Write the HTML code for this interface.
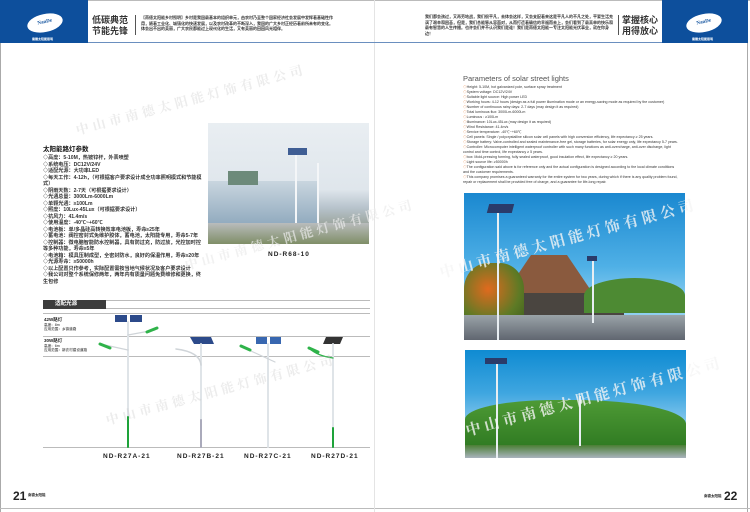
<!DOCTYPE html>
<html><head><meta charset="utf-8"><style>
*{margin:0;padding:0;box-sizing:border-box}
body{width:750px;height:512px;background:#fff;position:relative;overflow:hidden;font-family:"Liberation Sans","Noto Sans CJK SC",sans-serif;color:#222}
.a{position:absolute}
.blue{background:#0d4f9c}
.logo{position:absolute;left:27px;top:14px;width:36px;height:18px;background:#fff;border-radius:50%;transform:rotate(-12deg);font:bold 5px "Liberation Serif",serif;color:#0d4f9c;text-align:center;line-height:18px}
.lt{font:bold 3px sans-serif;color:#fff}
.t7{font-size:5.1px;line-height:6.5px;font-weight:bold;color:#333}
.en{font-size:3.6px;line-height:5px;color:#333;white-space:nowrap}
.en span{color:#e8742a}
.wm{position:absolute;font-family:"Noto Serif CJK SC",serif;font-weight:bold;color:rgba(200,200,200,0.35);font-size:13px;letter-spacing:4px;transform-origin:left center;white-space:nowrap}
.lab{font:bold 6.5px "Liberation Sans",sans-serif;letter-spacing:1px;color:#222}
</style></head><body>
<div class="a" style="left:0;top:0;width:750px;height:1px;background:#bbb"></div>
<div class="a" style="left:0;top:0;width:1px;height:512px;background:#aaa"></div>
<div class="a" style="left:747px;top:0;width:1px;height:512px;background:#aaa"></div>
<div class="a" style="left:0;top:508px;width:750px;height:1px;background:#bbb"></div>
<div class="a" style="left:374px;top:0;width:1px;height:512px;background:#e4e4e4"></div>
<div class="a blue" style="left:0;top:0;width:88px;height:43px"><div class="logo">NanDe</div><div class="a lt" style="left:32px;top:37px">南德太阳能照明</div></div>
<div class="a" style="left:88px;top:42px;width:287px;height:1px;background:#6a8fbf"></div>
<div class="a" style="left:92px;top:15px;font-size:9px;line-height:11px;font-weight:bold;color:#333">低碳典范<br>节能先锋</div>
<div class="a" style="left:135px;top:15px;width:1px;height:20px;background:#555"></div>
<div class="a" style="left:141px;top:15px;width:195px;font-size:4px;line-height:5.5px;font-weight:bold;color:#333">【南德太阳能乡村照明】乡村是我国最基本的组织单元，由农村乃至整个国家经济社会发展中发挥着基础性作用，随着工业化、城镇化的快速发展，以及农村改革的不断深入，我国的广大乡村正经历着前所未有的变化。体会出不出的美丽，广大农民都能过上现代化的生活，又有美丽的田园风光相伴。</div>
<div class="a blue" style="left:662px;top:0;width:86px;height:43px"><div class="logo" style="left:24px">NanDe</div><div class="a lt" style="left:30px;top:37px">南德太阳能照明</div></div>
<div class="a" style="left:375px;top:42px;width:287px;height:1px;background:#6a8fbf"></div>
<div class="a" style="left:425px;top:14px;width:190px;font-size:4px;line-height:5.5px;font-weight:bold;color:#333">我们都会孩过，又再劳地战，我们很平凡，去体会这样，又会支配着来这是平凡人的不凡之处，平要生活充满了艰辛和困苦，但是，我们总能够从容面对，从而打造着确信的幸福而去上，会们看到了最真单的快乐和最有智慧的人生传播。也许会们并不认识我们是谁！我们是南德太阳能一专注太阳能光伏事业，就在你身边！</div>
<div class="a" style="left:618px;top:15px;width:1px;height:20px;background:#555"></div>
<div class="a" style="left:622px;top:15px;font-size:9px;line-height:11px;font-weight:bold;color:#333">掌握核心<br>用得放心</div>

<div class="a" style="left:43px;top:143px;font-size:6.5px;font-weight:bold;color:#111">太阳能路灯参数</div>
<div class="a t7" style="left:43px;top:155px;width:162px">◇高度：5-10M，热镀锌杆，外表喷塑<br>◇系统电压：DC12V/24V<br>◇适配光源：大功率LED<br>◇每天工作：4-12h，（可根据客户要求设计成全功率照明模式和节能模式）<br>◇阴雨天数：2-7天（可根据要求设计）<br>◇光通总量：3000Lm-6000Lm<br>◇单颗光通：≥100Lm<br>◇照度：10Lux-45Lux（可根据要求设计）<br>◇抗风力：41.4m/s<br>◇使用温度：-40℃~+60℃<br>◇电池板：单/多晶硅高转换效率电池板，寿命≥25年<br>◇蓄电池：阀控密封式免维护胶体，蓄电池，太阳能专用，寿命5-7年<br>◇控制器：微电脑智能防水控制器，具有防过充，防过放，光控加时控等多种功能，寿命≥5年<br>◇电池箱：模具压制成型，全密封防水，良好的保温作用，寿命≥20年<br>◇光源寿命：≥50000h<br>◇以上配置只作参考，实际配置需按当地气候状况及客户要求设计<br>◇我公司对整个系统保修两年，两年内有质量问题免费维修和更换，终生包修</div>
<div class="a" style="left:208px;top:123px;width:161px;height:121px;background:linear-gradient(#e9eef2,#dfe6ec 55%,#b7c3cc 70%,#9aa39a 85%,#7c8c6a);overflow:hidden">
<div class="a" style="left:0;top:58px;width:110px;height:45px;background:linear-gradient(#c9d6df,#8fa9bd)"></div>
<div class="a" style="left:20px;top:48px;width:30px;height:14px;background:#6d8a7a"></div>
<div class="a" style="left:87px;top:25px;width:2px;height:96px;background:#f4f6f8"></div>
<div class="a" style="left:80px;top:25px;width:19px;height:7px;background:#3f5e94"></div>
<div class="a" style="left:109px;top:40px;width:2px;height:75px;background:#f4f6f8"></div>
<div class="a" style="left:0;top:100px;width:161px;height:21px;background:linear-gradient(#b9bcbd,#7f8e67)"></div>
</div>
<div class="a lab" style="left:268px;top:251px">ND-R68-10</div>

<div class="a" style="left:43px;top:300px;width:63px;height:9px;background:#3c3c3c;color:#fff;font-size:5.5px;font-weight:bold;padding-left:12px;line-height:9px">适配光源</div>
<div class="a" style="left:106px;top:300px;width:264px;height:1px;background:#bbb"></div>
<div class="a" style="left:106px;top:308px;width:264px;height:1px;background:#bbb"></div>
<div class="a" style="left:43px;top:313px;width:327px;height:1px;background:#bbb"></div>
<div class="a" style="left:43px;top:336px;width:327px;height:1px;background:#bbb"></div>
<div class="a" style="left:43px;top:356px;width:327px;height:1px;background:#bbb"></div>
<div class="a" style="left:43px;top:447px;width:327px;height:1px;background:#bbb"></div>
<div class="a" style="left:44px;top:318px;font-size:3.6px;line-height:4.5px;color:#222"><b style="font-size:4.5px">42W路灯</b><br>高度：8m<br>应用范围：乡镇道路</div>
<div class="a" style="left:44px;top:339px;font-size:3.6px;line-height:4.5px;color:#222"><b style="font-size:4.5px">30W路灯</b><br>高度：6m<br>应用范围：新农村建设道路</div>
<svg class="a" style="left:0;top:0" width="375" height="512">
<g stroke-linecap="round">
<rect x="115" y="315" width="12" height="7" fill="#2c4a8a"/><rect x="130" y="315" width="12" height="7" fill="#2c4a8a"/>
<line x1="128" y1="322" x2="128" y2="417" stroke="#dfe4e8" stroke-width="2"/><line x1="128" y1="417" x2="128" y2="447" stroke="#1ea33a" stroke-width="2"/>
<path d="M128 335 L155 330 M128 350 L105 345" stroke="#cfd4d8" stroke-width="1.2" fill="none"/>
<path d="M147 332 L157 328 M100 344 L110 348" stroke="#2fb34a" stroke-width="3"/>
<polygon points="190,337 211,337 214,344 194,344" fill="#2c4a8a"/>
<line x1="201" y1="344" x2="201" y2="420" stroke="#dfe4e8" stroke-width="2"/><line x1="201" y1="420" x2="201" y2="447" stroke="#aab" stroke-width="2"/>
<path d="M201 365 Q200 352 176 349" stroke="#cfd4d8" stroke-width="1.5" fill="none"/>
<rect x="256" y="337" width="11" height="7" fill="#3867b0"/><rect x="270" y="337" width="11" height="7" fill="#3867b0"/>
<line x1="268" y1="344" x2="268" y2="447" stroke="#dfe4e8" stroke-width="2"/>
<path d="M240 346 L275 362" stroke="#cfd4d8" stroke-width="1.2"/><path d="M241 346 L250 350" stroke="#2fb34a" stroke-width="3"/>
<polygon points="326,337 343,337 340,344 323,344" fill="#333"/>
<line x1="333" y1="344" x2="333" y2="428" stroke="#dfe4e8" stroke-width="2"/><line x1="333" y1="428" x2="333" y2="447" stroke="#1ea33a" stroke-width="2"/>
<path d="M333 358 Q318 356 310 349" stroke="#2fb34a" stroke-width="1.2" fill="none"/><path d="M309 348 L318 352" stroke="#2fb34a" stroke-width="3"/>
</g></svg>
<div class="a lab" style="left:103px;top:453px">ND-R27A-21</div>
<div class="a lab" style="left:177px;top:453px">ND-R27B-21</div>
<div class="a lab" style="left:244px;top:453px">ND-R27C-21</div>
<div class="a lab" style="left:311px;top:453px">ND-R27D-21</div>
<div class="a" style="left:13px;top:489px;font-size:12px;font-weight:bold">21</div>
<div class="a" style="left:28px;top:493px;font-size:3.5px;font-weight:bold">南德太阳能</div>

<div class="a" style="left:463px;top:74px;font-size:7.5px;color:#555">Parameters of solar street lights</div>
<div class="a en" style="left:463px;top:85px"><span>◇</span>Height: 5-10M, hot galvanized  pole, surface spray treatment<br><span>◇</span>System voltage: DC12V/24V<br><span>◇</span>Suitable light source: High power LED<br><span>◇</span>Working hours: 4-12 hours (design as a full power illumination mode or an energy-saving mode as required by the customer)<br><span>◇</span>Number of continuous rainy days: 2-7 days (may design it as required)<br><span>◇</span>Total luminous flux: 3000Lm-6000Lm<br><span>◇</span>Luminous : ≥100Lm<br><span>◇</span>Illuminance: 10Lux-45Lux (may design it as required)<br><span>◇</span>Wind Resistance: 41.4m/s<br><span>◇</span>Service temperature: -40℃~+60℃<br><span>◇</span>Cell panels: Single / polycrystalline silicon solar cell panels with high conversion efficiency, life expectancy ≥ 25 years.<br><span>◇</span>Storage battery: Valve-controlled and sealed maintenance-free gel, storage batteries, for solar energy only, life expectancy 5-7 years.<br><span>◇</span>Controller: Microcomputer intelligent waterproof controller with such many functions as anti-overcharge, anti-over discharge, light<br>control and time control, life expectancy ≥ 5 years.<br><span>◇</span>box: Mold-pressing forming, fully sealed waterproof, good insulation effect, life expectancy ≥ 20 years.<br><span>◇</span>Light source life: ≥50000h<br><span>◇</span>The configuration said above is for reference only and the actual configuration is designed according to the local climate conditions<br>and the customer requirements.<br><span>◇</span>This company promises a guaranteed warranty for the entire system for two years, during which if there is any quality problem found,<br>repair or replacement shall be provided free of charge, and a guarantee for life-long repair.</div>
<div class="a" style="left:464px;top:193px;width:221px;height:147px;background:linear-gradient(#1a88d0,#4fb0e6 50%,#8fcff0 75%);overflow:hidden">
<div class="a" style="left:40px;top:62px;width:90px;height:40px;background:#8a5a3e;clip-path:polygon(30% 0,70% 0,100% 100%,0 100%)"></div>
<div class="a" style="left:40px;top:100px;width:120px;height:22px;background:#4a4540"></div>
<div class="a" style="left:0;top:70px;width:60px;height:65px;background:radial-gradient(circle at 40% 40%,#e06a1e,#5d7a25 60%,#3a5a1c);border-radius:40% 40% 0 0"></div>
<div class="a" style="left:120px;top:85px;width:101px;height:35px;background:#4d8a33;border-radius:50% 50% 0 0"></div>
<div class="a" style="left:0;top:122px;width:221px;height:25px;background:linear-gradient(#9aa3a8,#606670)"></div>
<div class="a" style="left:33px;top:15px;width:2px;height:132px;background:#e8eef2"></div>
<div class="a" style="left:24px;top:11px;width:25px;height:9px;background:#2a3b6a;transform:skewX(-15deg)"></div>
<div class="a" style="left:128px;top:65px;width:2px;height:65px;background:#e8eef2"></div>
<div class="a" style="left:123px;top:63px;width:10px;height:5px;background:#2a3b6a"></div>
</div>
<div class="a" style="left:465px;top:350px;width:221px;height:108px;background:linear-gradient(#0f8bd2,#3fa6e0 40%,#8ccbee 70%);overflow:hidden">
<div class="a" style="left:0;top:50px;width:221px;height:48px;background:linear-gradient(#4e9a35,#2f7a22);border-radius:40% 50% 0 0"></div>
<div class="a" style="left:0;top:95px;width:221px;height:13px;background:linear-gradient(#4b7f35,#a9b3bd)"></div>
<div class="a" style="left:31px;top:10px;width:2px;height:98px;background:#e8eef2"></div>
<div class="a" style="left:20px;top:8px;width:22px;height:6px;background:#2a3b6a"></div>
<div class="a" style="left:114px;top:46px;width:2px;height:50px;background:#e8eef2"></div>
</div>
<div class="a" style="left:704px;top:494px;font-size:3.5px;font-weight:bold">南德太阳能</div>
<div class="a" style="left:724px;top:489px;font-size:12px;font-weight:bold">22</div>

<div class="wm" style="left:76px;top:120px;transform:rotate(-15deg)">中山市南德太阳能灯饰有限公司</div>
<div class="wm" style="left:106px;top:410px;transform:rotate(-15deg)">中山市南德太阳能灯饰有限公司</div>
<div class="wm" style="left:185px;top:255px;transform:rotate(-15deg);color:rgba(235,235,235,0.7)">中山市南德太阳能灯饰有限公司</div>
<div class="wm" style="left:440px;top:262px;transform:rotate(-15deg);color:rgba(245,245,245,0.8);font-size:15px">中山市南德太阳能灯饰有限公司</div>
<div class="wm" style="left:466px;top:420px;transform:rotate(-15deg);color:rgba(245,245,245,0.8);font-size:15px">中山市南德太阳能灯饰有限公司</div>
</body></html>
